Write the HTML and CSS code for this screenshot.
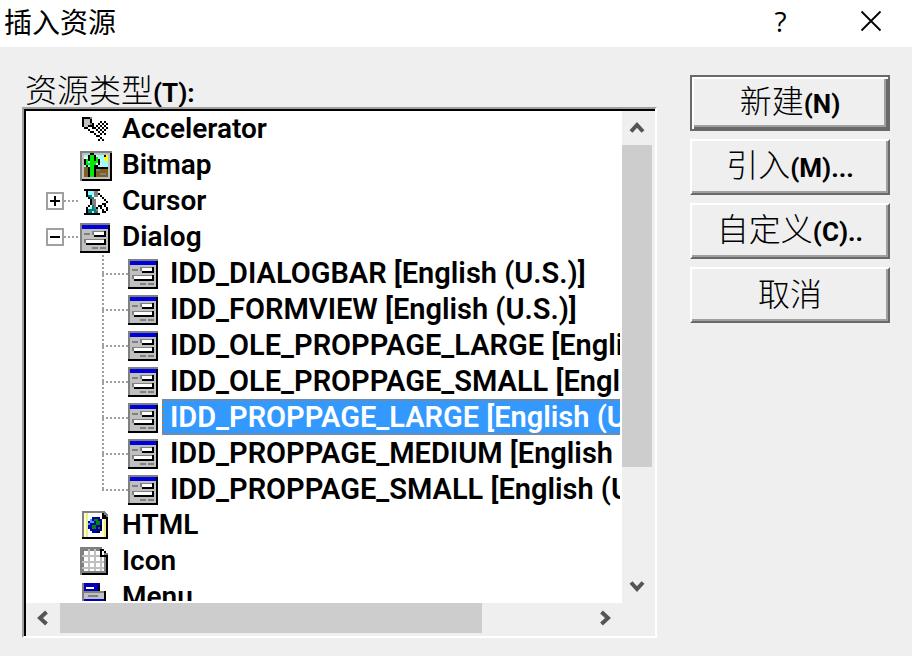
FILE: index.html
```html
<!DOCTYPE html>
<html lang="zh-CN">
<head>
    <meta charset="UTF-8">
    <meta name="viewport" content="width=device-width, initial-scale=1.0">
    <title>插入资源</title>
    <link rel="stylesheet" href="styles.css">
</head>
<body>

    <!-- Icon shapes, drawn on a 16 x 16 grid -->
    <svg class="icon-defs" aria-hidden="true">
        <symbol id="icon-accelerator" viewBox="0 0 16 16">
            <path fill="#c0c0c0" d="M2 3h4v4H2z"/>
            <path fill="#808080" d="M2 2h4v1H2zM5 5h1v2H5z"/>
            <path fill="#000" d="M1 2h1v5H1zM2 2h3v1H2zM5 3h1v2H5zM2 7h2v1H2zM4 6h2v1H4zM6 5h1v3H6zM4 8h1v1H4zM5 9h2v1H5zM7 10h1v1H7zM8 11h2v1H8zM10 12h1v1h-1zM9 13h1v1H9zM11 13h1v1h-1zM7 7h1v1H7zM8 6h1v1H8zM9 5h1v1H9zM10 4h1v1h-1zM12 4h1v1h-1zM11 5h1v1h-1zM13 5h1v1h-1zM10 6h1v1h-1zM12 6h1v1h-1zM9 7h1v1H9zM11 7h1v1h-1zM13 7h1v1h-1zM8 8h1v1H8zM10 8h1v1h-1zM12 8h1v1h-1zM9 9h1v1H9zM11 9h1v1h-1zM10 10h1v1h-1zM12 10h1v1h-1z"/>
        </symbol>
        <symbol id="icon-bitmap" viewBox="0 0 16 16">
            <path fill="#808080" d="M0 1h16v15H0z"/>
            <path fill="#c0c0c0" d="M1 2h14v13H1z"/>
            <path fill="#000" d="M15 2h1v14H1v-1h14z"/>
            <path fill="#9ff" d="M2 3h12v6H2z"/>
            <path fill="#fff" d="M7 3h2v1H7zM9 5h2v1H9zM8 7h3v1H8zM2 4h2v1H2z"/>
            <path fill="#806020" d="M2 9h12v5H2z"/>
            <path fill="#808080" d="M8 10h2v1H8zM10 12h3v1h-3z"/>
            <path fill="#000" d="M8 9h6v1H8zM5 2h2v1H5zM4 3h1v3H4zM2 5h1v3H2zM3 8h1v1H3zM7 3h1v3H7zM9 5h1v3H9zM7 8h2v1H7zM4 9h1v5H4zM7 9h1v5H7zM12 3h1v1h-1z"/>
            <path fill="#0e0" d="M5 3h2v11H5zM3 5h1v3H3zM4 7h1v1H4zM8 4h1v3H8zM7 6h1v2H7z"/>
            <path fill="#ff0" d="M13 3h1v3h-2V4h1z"/>
        </symbol>
        <symbol id="icon-cursor" viewBox="0 0 16 16">
            <path fill="#000" d="M2 2h8v1H2zM2 14h8v1H2zM3 3h1v3H3zM4 6h1v1H4zM5 7h1v3H5zM4 10h1v1H4zM3 11h1v3H3z"/>
            <path fill="#008080" d="M4 5h2v1H4zM5 6h2v1H5zM4 12h5v2H4zM6 10h1v2H6z"/>
            <path fill="#8ff" d="M4 3h3v2H4zM5 11h1v1H5zM6 13h1v1H6z"/>
            <path fill="#808080" d="M7 3h2v3H7zM6 7h2v3H6zM7 10h1v2H7zM8 12h1v1H8z"/>
            <path fill="#fff" d="M9 5h1v6H9zM10 6h1v4h-1zM11 7h1v5h-1zM12 8h1v1h-1z"/>
            <path fill="#000" d="M9 4h1v1H9zM10 5h1v1h-1zM11 6h1v1h-1zM12 7h1v1h-1zM13 8h1v1h-1zM11 9h2v1h-2zM8 11h1v1H8zM9 10h1v1H9zM10 10h1v2h-1zM11 12h1v2h-1zM13 11h1v2h-1zM12 10h1v1h-1zM12 13h1v1h-1z"/>
        </symbol>
        <symbol id="icon-dialog" viewBox="0 0 16 16">
            <path fill="#808080" d="M0 1h15v15H0z"/>
            <path fill="#c0c0c0" d="M1 2h13v13H1z"/>
            <path fill="#00d" d="M1 2h13v2H1z"/>
            <path fill="#000" d="M14 2h1v14H0v-1h14z"/>
            <path fill="#808080" d="M2 6h3v1H2zM6 5h7v2H6zM2 9h11v2H2zM6 13h3v1H6zM10 13h3v1h-3z"/>
            <path fill="#fff" d="M7 5.500h5v1.500H7zM3 9.500h9v1.500H3z"/>
            <path fill="#000" d="M12 5h1v3H7V7h5zM12 9h1v3H3v-1h9z"/>
        </symbol>
        <symbol id="icon-html" viewBox="0 0 16 16">
            <path fill="#808080" d="M1 1h11l2 2v12H1z"/>
            <path fill="#fff" d="M2 2h10v2h1v10H2z"/>
            <path fill="#ffc" d="M2 2h2v12H2zM11 4h2v10h-2z"/>
            <path fill="#ee8" d="M3 2h1v12H3zM12 5h1v9h-1z"/>
            <path fill="#000" d="M11 2h1v1h1v1h1v11H1v-1h12V5h-2z"/>
            <path fill="#00a" d="M6 4h4v1h1v6h-1v1H6v-1H5v-1H4V6h1V5h1z"/>
            <path fill="#3af" d="M5 5h1v1H5zM5 6h2v1H5zM4 7h1v1H4z"/>
            <path fill="#080" d="M7 5h2v1H7zM8 6h2v2H8zM6 8h2v2H6zM9 9h1v1H9z"/>
            <path fill="#003" d="M10 8h1v2h-1zM8 11h2v1H8z"/>
        </symbol>
        <symbol id="icon-icon" viewBox="0 0 16 16">
            <path fill="#808080" d="M0 1h11v1h1v1h1v1h1v11H0z"/>
            <path fill="#fff" d="M2 3h2v2H2zM5 3h2v2H5zM8 3h2v2H8zM2 6h2v2H2zM5 6h2v2H5zM8 6h2v2H8zM11 6h1v2h-1zM2 9h2v2H2zM5 9h2v2H5zM8 9h2v2H8zM11 9h1v2h-1zM2 12h2v1H2zM5 12h2v1H5zM8 12h2v1H8zM11 12h1v1h-1z"/>
            <path fill="#c0c0c0" d="M1 5h9v1H1zM1 8h11v1H1zM1 11h11v1H1zM4 2h1v11H4zM7 2h1v11H7zM10 6h1v7h-1z"/>
            <path fill="#fff" d="M11 3h1v2h-1z"/>
            <path fill="#000" d="M10 2h1v3h3v10H1v-1h12V6h-3zM11 2h1v1h-1zM12 3h1v1h-1z"/>
        </symbol>
        <symbol id="icon-menu" viewBox="0 0 16 16">
            <path fill="#808080" d="M1 1h9v4H1zM1 5h12v8H1z"/>
            <path fill="#00b" d="M2 1h8v4H2z"/>
            <path fill="#fff" d="M3 3h4v1H3z"/>
            <path fill="#c0c0c0" d="M2 6h10v3H2z"/>
            <path fill="#808080" d="M4 7h5v1H4z"/>
            <path fill="#00b" d="M2 9h10v3H2z"/>
            <path fill="#000" d="M9 2h1v3H9zM12 5h1v8H1v-1h11z"/>
        </symbol>
    </svg>

    <!-- Title Bar -->
    <header class="title-bar">
        <h1 class="title">插入资源</h1>
        <button class="title-btn help-btn" aria-label="帮助">?</button>
        <button class="title-btn" aria-label="关闭">
            <svg width="22" height="22" viewBox="0 0 22 22"><path d="M1.500 1.500L20.500 20.500M20.500 1.500L1.500 20.500" stroke="#000" stroke-width="1.800" fill="none"/></svg>
        </button>
    </header>

    <main class="dialog">
        <section class="types">
            <h2 class="types-label" id="types-label">资源类型<b>(T):</b></h2>

            <div class="list-box">
                <!-- Resource Tree -->
                <ul class="tree" role="tree" aria-labelledby="types-label">
                    <li class="row" role="treeitem">
                        <span class="indent"></span>
                        <svg class="icon"><use href="#icon-accelerator"/></svg>
                        <span class="name">Accelerator</span>
                    </li>
                    <li class="row" role="treeitem">
                        <span class="indent"></span>
                        <svg class="icon"><use href="#icon-bitmap"/></svg>
                        <span class="name">Bitmap</span>
                    </li>
                    <li class="row" role="treeitem" aria-expanded="false">
                        <button class="expander" aria-label="展开"><svg width="18" height="18" viewBox="0 0 18 18"><path d="M4 8h10v2H4zM8 4h2v10H8z"/></svg></button>
                        <span class="stub"></span>
                        <svg class="icon"><use href="#icon-cursor"/></svg>
                        <span class="name">Cursor</span>
                    </li>
                    <li class="row" role="treeitem" aria-expanded="true">
                        <button class="expander" aria-label="折叠"><svg width="18" height="18" viewBox="0 0 18 18"><path d="M4 8h10v2H4z"/></svg></button>
                        <span class="stub"></span>
                        <svg class="icon"><use href="#icon-dialog"/></svg>
                        <span class="name">Dialog</span>
                    </li>
                    <li class="row child" role="treeitem">
                        <span class="branch"></span>
                        <svg class="icon"><use href="#icon-dialog"/></svg>
                        <span class="name">IDD_DIALOGBAR [English (U.S.)]</span>
                    </li>
                    <li class="row child" role="treeitem">
                        <span class="branch"></span>
                        <svg class="icon"><use href="#icon-dialog"/></svg>
                        <span class="name">IDD_FORMVIEW [English (U.S.)]</span>
                    </li>
                    <li class="row child" role="treeitem">
                        <span class="branch"></span>
                        <svg class="icon"><use href="#icon-dialog"/></svg>
                        <span class="name">IDD_OLE_PROPPAGE_LARGE [English (U.S.)]</span>
                    </li>
                    <li class="row child" role="treeitem">
                        <span class="branch"></span>
                        <svg class="icon"><use href="#icon-dialog"/></svg>
                        <span class="name">IDD_OLE_PROPPAGE_SMALL [English (U.S.)]</span>
                    </li>
                    <li class="row child" role="treeitem" aria-selected="true">
                        <span class="branch"></span>
                        <svg class="icon"><use href="#icon-dialog"/></svg>
                        <span class="name selected">IDD_PROPPAGE_LARGE [English (U.S.)]</span>
                    </li>
                    <li class="row child" role="treeitem">
                        <span class="branch"></span>
                        <svg class="icon"><use href="#icon-dialog"/></svg>
                        <span class="name">IDD_PROPPAGE_MEDIUM [English (U.S.)]</span>
                    </li>
                    <li class="row child" role="treeitem">
                        <span class="branch last"></span>
                        <svg class="icon"><use href="#icon-dialog"/></svg>
                        <span class="name">IDD_PROPPAGE_SMALL [English (U.S.)]</span>
                    </li>
                    <li class="row" role="treeitem">
                        <span class="indent"></span>
                        <svg class="icon"><use href="#icon-html"/></svg>
                        <span class="name">HTML</span>
                    </li>
                    <li class="row" role="treeitem">
                        <span class="indent"></span>
                        <svg class="icon"><use href="#icon-icon"/></svg>
                        <span class="name">Icon</span>
                    </li>
                    <li class="row" role="treeitem">
                        <span class="indent"></span>
                        <svg class="icon"><use href="#icon-menu"/></svg>
                        <span class="name">Menu</span>
                    </li>
                </ul>

                <!-- Scrollbars -->
                <div class="scroll-v">
                    <button class="arrow" aria-label="向上滚动"><svg width="16" height="16" viewBox="0 0 16 16"><path d="M2 11.500L8 5L14 11.500"/></svg></button>
                    <div class="track"><div class="thumb"></div></div>
                    <button class="arrow" aria-label="向下滚动"><svg width="16" height="16" viewBox="0 0 16 16"><path d="M2 4.500L8 11L14 4.500"/></svg></button>
                </div>
                <div class="scroll-h">
                    <button class="arrow" aria-label="向左滚动"><svg width="16" height="16" viewBox="0 0 16 16"><path d="M11.500 2L5 8L11.500 14"/></svg></button>
                    <div class="track"><div class="thumb"></div></div>
                    <button class="arrow" aria-label="向右滚动"><svg width="16" height="16" viewBox="0 0 16 16"><path d="M4.500 2L11 8L4.500 14"/></svg></button>
                </div>
            </div>
        </section>

        <!-- Command Buttons -->
        <div class="commands">
            <button class="cmd-btn default">新建<b>(N)</b></button>
            <button class="cmd-btn">引入<b>(M)...</b></button>
            <button class="cmd-btn">自定义<b>(C)..</b></button>
            <button class="cmd-btn">取消</button>
        </div>
    </main>

</body>
</html>
```
FILE: styles.css
```css
/* Insert resource dialog */
* {
    box-sizing: border-box;
}

body {
    margin: 0;
    min-height: 100vh;
    display: flex;
    flex-direction: column;
    background-color: #efefef;
    color: #000;
    font-family: Roboto, "Noto Sans CJK SC", sans-serif;
}

button {
    padding: 0;
    border: none;
    background: none;
    color: #000;
    font-family: inherit;
}

.icon-defs {
    display: none;
}

/* Title bar */
.title-bar {
    height: 47px;
    padding: 0 0 6px 4px;
    display: flex;
    align-items: center;
    background-color: #fff;
}

.title {
    flex: 1;
    margin: 0;
    font-family: "Noto Sans CJK SC", sans-serif;
    font-size: 28px;
    line-height: 40px;
    font-weight: normal;
}

.title-btn {
    width: 97px;
    height: 40px;
    display: flex;
    align-items: center;
    justify-content: center;
}

.title-btn:last-child {
    width: 83px;
}

.help-btn {
    font-family: "Open Sans", sans-serif;
    font-size: 28px;
    line-height: 40px;
}

/* Main area */
.dialog {
    flex: 1;
    padding: 28px 22px 18px;
    display: flex;
    gap: 33px;
}

.types {
    flex: 1;
    min-width: 0;
    display: flex;
    flex-direction: column;
}

.types-label {
    height: 32px;
    margin: 0;
    padding-left: 3px;
    font-size: 32px;
    line-height: 32px;
    font-weight: 300;
}

.types-label b,
.cmd-btn b {
    font-size: 26px;
    font-weight: 700;
}

.list-box {
    flex: 1;
    display: grid;
    grid-template-columns: minmax(0, 1fr) 30px;
    grid-template-rows: 1fr 31px;
    padding: 2px 3px 2px 2px;
    border: 2px solid #fff;
    border-top-color: #a0a0a0;
    border-left-color: #a0a0a0;
    box-shadow: inset 2px 2px 0 #000;
}

/* Tree */
.tree {
    height: 492px;
    margin: 0;
    padding: 0;
    list-style: none;
    overflow: hidden;
    background-color: #fff;
    border: 0 solid #fff;
    border-width: 0 2px 2px 0;
}

.row {
    height: 36px;
    padding-left: 20px;
    display: flex;
    align-items: center;
    overflow: hidden;
}

.row.child {
    padding-left: 76px;
}

.indent {
    flex: none;
    width: 34px;
}

.expander {
    flex: none;
    width: 18px;
    height: 18px;
    box-shadow: inset 0 0 0 2px #a0a0a0;
}

.expander svg {
    display: block;
}

.stub {
    flex: none;
    width: 16px;
    height: 2px;
    background: repeating-linear-gradient(to right, #a0a0a0 0 2px, transparent 2px 4px);
}

.branch {
    flex: none;
    width: 26px;
    height: 36px;
    background:
        repeating-linear-gradient(to bottom, #a0a0a0 0 2px, transparent 2px 4px) 0 0 / 2px 36px no-repeat,
        repeating-linear-gradient(to right, #a0a0a0 0 2px, transparent 2px 4px) 0 18px / 26px 2px no-repeat;
}

/* the vertical guide stops at the last child */
.branch.last {
    background-size: 2px 18px, 26px 2px;
}

.icon {
    flex: none;
    width: 32px;
    height: 32px;
    margin-right: 2px;
    shape-rendering: crispEdges;
}

.name {
    padding: 0 8px;
    font-size: 28px;
    line-height: 36px;
    font-weight: 600;
    white-space: nowrap;
}

.child .name {
    font-size: 29px;
}

.name.selected {
    background-color: #3399ff;
    color: #fff;
    outline: 2px dotted #a08060;
    outline-offset: -2px;
}

/* Scrollbars */
.scroll-v,
.scroll-h {
    display: flex;
}

.scroll-v {
    flex-direction: column;
}

.scroll-v .arrow {
    width: 30px;
    height: 34px;
}

.scroll-h .arrow {
    width: 34px;
    height: 30px;
}

.arrow {
    display: flex;
    align-items: center;
    justify-content: center;
}

.arrow path {
    fill: none;
    stroke: #555;
    stroke-width: 4;
}

.track {
    flex: 1;
}

.thumb {
    background-color: #cdcdcd;
}

.scroll-v .thumb {
    height: 76%;
}

.scroll-h .thumb {
    width: 80%;
    height: 30px;
}

/* Command buttons */
.commands {
    width: 200px;
    display: flex;
    flex-direction: column;
    gap: 8px;
}

.cmd-btn {
    height: 56px;
    font-size: 32px;
    line-height: 40px;
    font-weight: 300;
    border: 2px solid #696969;
    border-top-color: #fff;
    border-left-color: #fff;
    box-shadow: inset -2px -2px 0 #a0a0a0;
}

.cmd-btn.default {
    border-color: #696969;
    box-shadow: inset 2px 2px 0 #fff, inset -2px -2px 0 #696969, inset -4px -4px 0 #a0a0a0;
}
```
